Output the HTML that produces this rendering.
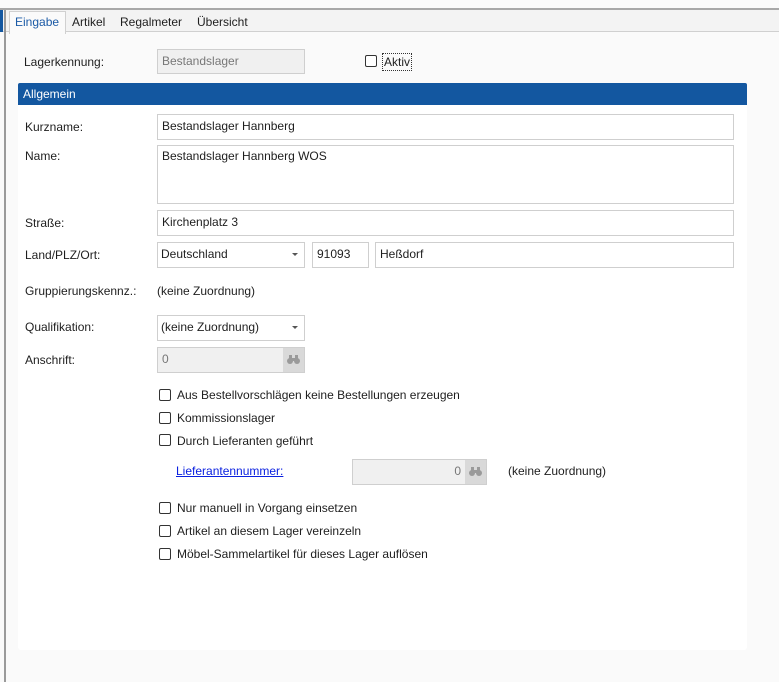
<!DOCTYPE html>
<html><head><meta charset="utf-8"><style>
*{box-sizing:border-box;margin:0;padding:0}
body{width:779px;height:682px;background:#fafafa;font-family:"Liberation Sans",sans-serif;font-size:12px;color:#1e1e1e;position:relative;overflow:hidden}
.a{position:absolute;white-space:nowrap}
.in{position:absolute;border:1px solid #cfcfcf;background:#fff;padding:0 0 0 4px;line-height:22px}
.dis{background:#f0f0f0;color:#777}
.cb{position:absolute;width:12px;height:12px;border:1px solid #333;border-radius:2px;background:#fff}
.arr{position:absolute;right:6px;top:10px;width:0;height:0;border-left:3px solid transparent;border-right:3px solid transparent;border-top:3px solid #555}
.btn{position:absolute;right:0;top:0;bottom:0;width:21px;background:#d9d9d9}
.bino{position:absolute;left:4px;top:6px}
</style></head><body>
<div class="a" style="left:0;top:0;width:779px;height:8px;background:#fafafa"></div>
<div class="a" style="left:0;top:8px;width:779px;height:2px;background:#a8a8a8"></div>
<div class="a" style="left:0;top:10px;width:779px;height:22px;background:#f3f3f3;border-bottom:1px solid #d0d0d0"></div>
<div class="a" style="left:0;top:10px;width:3px;height:22px;background:#1357a0"></div>
<div class="a" style="left:4px;top:10px;width:2px;height:672px;background:#9a9a9a"></div>
<div class="a" style="left:9px;top:11px;width:57px;height:23px;background:#fafafa;border:1px solid #d0d0d0;border-bottom:none"></div>
<div class="a" style="left:15px;top:15px;color:#1b5aa6">Eingabe</div>
<div class="a" style="left:72px;top:15px">Artikel</div>
<div class="a" style="left:120px;top:15px">Regalmeter</div>
<div class="a" style="left:197px;top:15px">Übersicht</div>

<div class="a" style="left:24px;top:55px">Lagerkennung:</div>
<div class="in dis" style="left:157px;top:49px;width:148px;height:25px">Bestandslager</div>
<div class="cb" style="left:365px;top:55px"></div>
<div class="a" style="left:382px;top:53px;border:1px dotted #333;padding:0 1px;line-height:16px">Aktiv</div>

<div class="a" style="left:18px;top:83px;width:729px;height:22px;background:#1357a0;color:#fff;padding:4px 0 0 5px;border-radius:2px 2px 0 0">Allgemein</div>
<div class="a" style="left:18px;top:105px;width:729px;height:545px;background:#fff;border-radius:0 0 3px 3px"></div>

<div class="a" style="left:25px;top:120px">Kurzname:</div>
<div class="in" style="left:157px;top:114px;width:577px;height:26px">Bestandslager Hannberg</div>
<div class="a" style="left:25px;top:149px">Name:</div>
<div class="in" style="left:157px;top:145px;width:577px;height:59px;line-height:20px">Bestandslager Hannberg WOS</div>
<div class="a" style="left:25px;top:216px">Straße:</div>
<div class="in" style="left:157px;top:210px;width:577px;height:26px">Kirchenplatz 3</div>
<div class="a" style="left:25px;top:248px">Land/PLZ/Ort:</div>
<div class="in" style="left:157px;top:242px;width:148px;height:26px;padding-left:3px">Deutschland<span class="arr"></span></div>
<div class="in" style="left:312px;top:242px;width:57px;height:26px">91093</div>
<div class="in" style="left:375px;top:242px;width:359px;height:26px">Heßdorf</div>
<div class="a" style="left:25px;top:284px">Gruppierungskennz.:</div>
<div class="a" style="left:157px;top:284px">(keine Zuordnung)</div>
<div class="a" style="left:25px;top:320px">Qualifikation:</div>
<div class="in" style="left:157px;top:315px;width:148px;height:26px;padding-left:3px">(keine Zuordnung)<span class="arr"></span></div>
<div class="a" style="left:25px;top:353px">Anschrift:</div>
<div class="in dis" style="left:157px;top:347px;width:148px;height:26px">0<span class="btn"><svg class="bino" width="13" height="11" viewBox="0 0 13 11"><g fill="#9a9a9a"><rect x="2" y="1" width="3" height="4"/><rect x="8" y="1" width="3" height="4"/><circle cx="3" cy="7" r="3"/><circle cx="10" cy="7" r="3"/><rect x="5" y="4" width="3" height="3"/></g></svg></span></div>

<div class="cb" style="left:159px;top:389px"></div><div class="a" style="left:177px;top:388px">Aus Bestellvorschlägen keine Bestellungen erzeugen</div>
<div class="cb" style="left:159px;top:412px"></div><div class="a" style="left:177px;top:411px">Kommissionslager</div>
<div class="cb" style="left:159px;top:434px"></div><div class="a" style="left:177px;top:434px">Durch Lieferanten geführt</div>
<div class="a" style="left:176px;top:464px;color:#0a20e0;text-decoration:underline">Lieferantennummer:</div>
<div class="in dis" style="left:352px;top:459px;width:135px;height:26px;text-align:right;padding-right:25px">0<span class="btn"><svg class="bino" width="13" height="11" viewBox="0 0 13 11"><g fill="#9a9a9a"><rect x="2" y="1" width="3" height="4"/><rect x="8" y="1" width="3" height="4"/><circle cx="3" cy="7" r="3"/><circle cx="10" cy="7" r="3"/><rect x="5" y="4" width="3" height="3"/></g></svg></span></div>
<div class="a" style="left:508px;top:464px">(keine Zuordnung)</div>
<div class="cb" style="left:159px;top:502px"></div><div class="a" style="left:177px;top:501px">Nur manuell in Vorgang einsetzen</div>
<div class="cb" style="left:159px;top:525px"></div><div class="a" style="left:177px;top:524px">Artikel an diesem Lager vereinzeln</div>
<div class="cb" style="left:159px;top:548px"></div><div class="a" style="left:177px;top:547px">Möbel-Sammelartikel für dieses Lager auflösen</div>
</body></html>
